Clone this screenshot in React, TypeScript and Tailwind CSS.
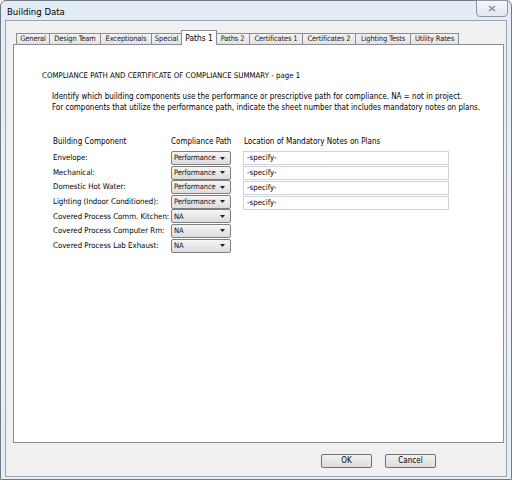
import React from 'react';

const tabs = ['General', 'Design Team', 'Exceptionals', 'Special', 'Paths 1', 'Paths 2', 'Certificates 1', 'Certificates 2', 'Lighting Tests', 'Utility Rates'];
const tabWidths = ['w-[34px]', 'w-[51px]', 'w-[51px]', 'w-[30px]', 'w-[36px]', 'w-[34px]', 'w-[53px]', 'w-[53px]', 'w-[55px]', 'w-[48px]'];

const rows = [
  { label: 'Envelope:', path: 'Performance' },
  { label: 'Mechanical:', path: 'Performance' },
  { label: 'Domestic Hot Water:', path: 'Performance' },
  { label: 'Lighting (Indoor Conditioned):', path: 'Performance' },
  { label: 'Covered Process Comm. Kitchen:', path: 'NA' },
  { label: 'Covered Process Computer Rm:', path: 'NA' },
  { label: 'Covered Process Lab Exhaust:', path: 'NA' },
];

const font = "font-['DejaVu_Sans_Condensed','Liberation_Sans',sans-serif]";

const Dropdown = ({ value }: { value: string }) => (
  <div className="flex items-center justify-between w-[60px] h-[14px] border border-[#7d7e80] rounded-[2px] bg-gradient-to-b from-[#f6f6f6] to-[#dcdcdc] pl-[2px] pr-[5px]">
    <span className="text-[7.5px] leading-none text-[#111] tracking-[-0.1px]">{value}</span>
    <svg width="5" height="3" viewBox="0 0 5 3"><path d="M0 0h5L2.5 3z" fill="#222" /></svg>
  </div>
);

const App = () => {
  return (
    <div className={`w-[514px] h-[483px] bg-white ${font}`}>
      <div className="w-[512px] h-[480px] rounded-t-[6px] border border-[#6f7a86] bg-gradient-to-b from-[#e3ecf5] via-[#edf2f7] to-[#e6eef6] flex flex-col">
        {/* caption */}
        <div className="h-[19px] flex items-start justify-between pl-[6px] pr-[3px]">
          <span className="text-[9.5px] leading-none text-black mt-[6px]">Building Data</span>
          <div className="w-[32px] h-[17px] -mt-[1px] rounded-b-[4px] border border-[#8d97a2] bg-gradient-to-b from-[#f4f7fa] to-[#e2e8ee] flex items-center justify-center">
            <svg width="8" height="7" viewBox="0 0 8 7"><path d="M1 1l6 5M7 1L1 6" stroke="#8b8f94" strokeWidth="1.6" /></svg>
          </div>
        </div>
        {/* client area */}
        <div className="mx-[4px] h-[457px] border border-[#9aa3ad] bg-[#f0f0f0] flex flex-col pl-[7px] pr-[4px] pt-[8px]">
          <div className="flex items-end h-[15px] pl-[3px]">
            {tabs.map((t, i) => (
              t === 'Paths 1' ? (
                <div key={t} className={`${tabWidths[i]} h-[15px] -mx-[1px] border border-b-0 border-[#898c95] bg-white flex items-center justify-center text-[8.3px] text-black relative z-10 -mb-[1px] rounded-t-[1px] whitespace-nowrap`}>{t}</div>
              ) : (
                <div key={t} className={`${tabWidths[i]} h-[11px] border border-b-0 border-l-0 first:border-l border-[#898c95] bg-gradient-to-b from-[#f2f2f2] to-[#e3e3e3] flex items-center justify-center text-[7.5px] text-[#222] whitespace-nowrap tracking-[-0.15px]`}>{t}</div>
              )
            ))}
          </div>
          <div className="w-[491px] h-[399px] border border-[#898c95] bg-white text-[8px] text-black flex flex-col">
            <div className="pl-[28px] pt-[26px] leading-[10px] text-[7.8px]">COMPLIANCE PATH AND CERTIFICATE OF COMPLIANCE SUMMARY - page 1</div>
            <div className="pl-[38px] pt-[11px] leading-[10.5px]">
              <div>Identify which building components use the performance or prescriptive path for compliance. NA = not in project.</div>
              <div>For components that utilize the performance path, indicate the sheet number that includes mandatory notes on plans.</div>
            </div>
            <div className="flex pl-[39px] pt-[24px] leading-[10px]">
              <div className="w-[118px]">Building Component</div>
              <div className="w-[73px]">Compliance Path</div>
              <div>Location of Mandatory Notes on Plans</div>
            </div>
            <div className="flex pl-[39px] pt-[4px]">
              <div className="flex flex-col gap-[0.6px]">
                {rows.map(r => (
                  <div key={r.label} className="flex items-center h-[14px]">
                    <span className="w-[118px] whitespace-nowrap text-[7.8px]">{r.label}</span>
                    <Dropdown value={r.path} />
                  </div>
                ))}
              </div>
              <div className="flex flex-col gap-[1px] ml-[12px]">
                {rows.slice(0, 4).map(r => (
                  <div key={r.label} className="w-[206px] h-[14px] border border-[#cfd3d8] bg-white flex items-center pl-[3px] text-[7.8px]">-specify-</div>
                ))}
              </div>
            </div>
          </div>
          <div className="flex justify-end gap-[13px] pr-[66px] mt-[11px]">
            {['OK', 'Cancel'].map(b => (
              <div key={b} className="w-[51px] h-[14px] border border-[#707070] rounded-[2px] bg-gradient-to-b from-[#f2f2f2] to-[#dcdcdc] flex items-center justify-center text-[8px] text-black">{b}</div>
            ))}
          </div>
        </div>
      </div>
    </div>
  );
};

export default App;
